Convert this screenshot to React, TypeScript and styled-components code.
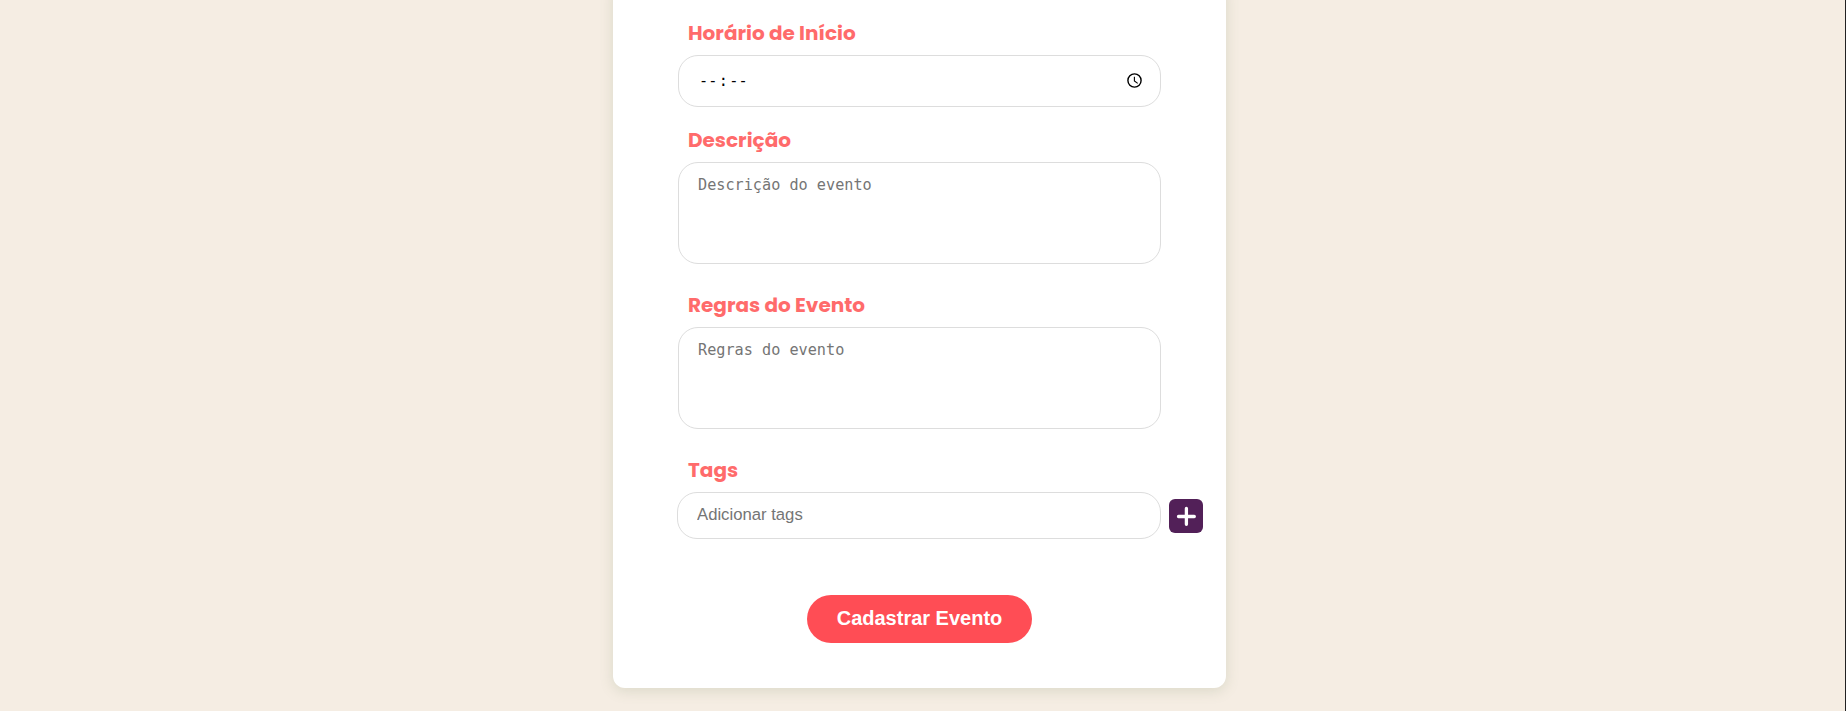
import React from "react";
import styled, { createGlobalStyle, css } from "styled-components";

const GlobalStyle = createGlobalStyle`
  *, *::before, *::after { box-sizing: border-box; }
  body { margin: 0; background: #f5ede3; overflow: hidden; }
`;

const Page = styled.main`
  display: flex;
  justify-content: center;
  align-items: flex-start;
  height: 711px;
  padding-right: 6px;
  background: #f5ede3;
  border-right: 1px solid #222;
  overflow: hidden;
`;

const Card = styled.form`
  display: flex;
  flex-direction: column;
  width: 613px;
  height: 708px;
  margin-top: -20px;
  padding: 38px 65px 45px;
  background: #fff;
  border-radius: 12px;
  box-shadow: 0 3px 14px rgba(104, 128, 84, 0.19);
`;

const Field = styled.div<{ $gap: number }>`
  display: flex;
  flex-direction: column;
  margin-bottom: ${(p) => p.$gap}px;
`;

const Label = styled.label`
  margin: 0 0 7px 10px;
  color: #ff6b6b;
  font: 700 20px/30px Poppins, Inter, sans-serif;
  white-space: nowrap;
`;

const outline = css`
  width: 483px;
  background: #fff;
  border: 1px solid #ddd;
  border-radius: 20px;
  outline: none;
`;

const TimeBox = styled.div`
  ${outline}
  display: flex;
  align-items: center;
  justify-content: space-between;
  height: 52px;
  padding: 0 18px 1px 20px;
`;

const TimeValue = styled.div`
  display: flex;
  color: #000;
  font: 15.2px/20px "DejaVu Sans Mono", monospace;
`;

const Colon = styled.span`
  width: 12px;
  text-align: center;
`;

const TextArea = styled.textarea`
  ${outline}
  display: block;
  height: 102px;
  padding: 12px 19px;
  resize: none;
  font: 15.2px/20px "DejaVu Sans Mono", monospace;
  &::placeholder { color: #757575; }
`;

const TagRow = styled.div`
  display: flex;
  align-items: center;
  gap: 8px;
  margin-left: -1px;
`;

const TagInput = styled.input`
  ${outline}
  flex: none;
  width: 484px;
  height: 47px;
  padding: 0 19px 2px;
  font: 16.7px "Liberation Sans", Arial, sans-serif;
  &::placeholder { color: #757575; }
`;

const AddButton = styled.button`
  flex: none;
  display: grid;
  place-items: center;
  width: 34px;
  height: 34px;
  margin-top: 1px;
  padding: 0;
  border: 0;
  border-radius: 6px;
  background: #522058;
`;

const SubmitButton = styled.button`
  align-self: center;
  width: 225px;
  height: 48px;
  padding: 0 0 2px;
  border: 0;
  border-radius: 24px;
  background: #ff4d55;
  color: #fff;
  font: bold 20px "Liberation Sans", Arial, sans-serif;
  white-space: nowrap;
`;

const ClockIcon = () => (
  <svg width="15" height="15" viewBox="0 0 15 15" fill="none" stroke="#000">
    <circle cx="7.5" cy="7.5" r="6.6" strokeWidth="1.4" />
    <path d="M7.4 3.8V8L10.7 10.4" strokeWidth="1.1" />
  </svg>
);

const PlusIcon = () => (
  <svg width="20" height="20" viewBox="0 0 20 20" stroke="#fff" strokeWidth="3.3" strokeLinecap="round">
    <path d="M10.4 2.5V18.3M2.5 10.5H18.3" />
  </svg>
);

export default function App() {
  return (
    <>
      <GlobalStyle />
      <Page>
        <Card>
          <Field $gap={18}>
            <Label>Horário de Início</Label>
            <TimeBox>
              <TimeValue>
                <span>--</span>
                <Colon>:</Colon>
                <span>--</span>
              </TimeValue>
              <ClockIcon />
            </TimeBox>
          </Field>
          <Field $gap={26}>
            <Label htmlFor="descricao">Descrição</Label>
            <TextArea id="descricao" placeholder="Descrição do evento" />
          </Field>
          <Field $gap={26}>
            <Label htmlFor="regras">Regras do Evento</Label>
            <TextArea id="regras" placeholder="Regras do evento" />
          </Field>
          <Field $gap={56}>
            <Label htmlFor="tags">Tags</Label>
            <TagRow>
              <TagInput id="tags" placeholder="Adicionar tags" />
              <AddButton type="button" aria-label="Adicionar">
                <PlusIcon />
              </AddButton>
            </TagRow>
          </Field>
          <SubmitButton type="button">Cadastrar Evento</SubmitButton>
        </Card>
      </Page>
    </>
  );
}
